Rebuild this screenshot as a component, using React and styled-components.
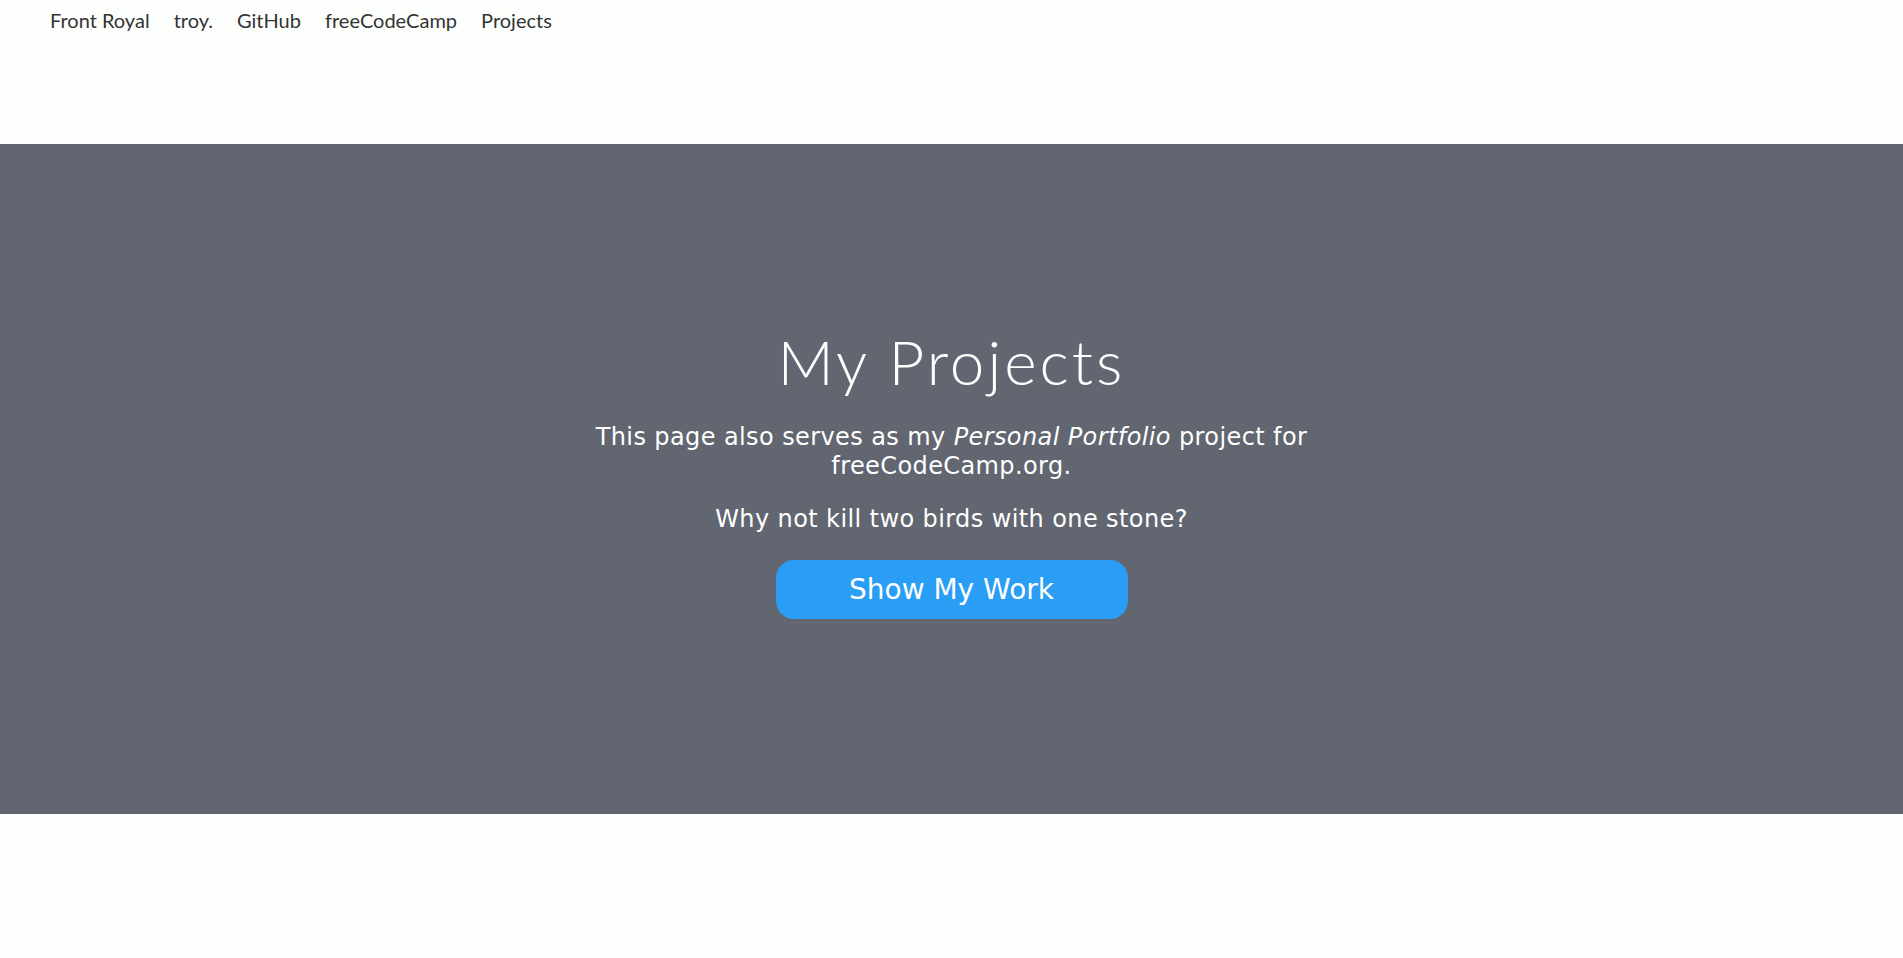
import React from "react";
import styled, { createGlobalStyle } from "styled-components";

const GlobalStyle = createGlobalStyle`
  * {
    box-sizing: border-box;
  }
  body {
    margin: 0;
    background-color: #fdfffc;
    font-family: "Lato", "Open Sans", sans-serif;
  }
`;

export default function App() {
  return (
    <>
      <GlobalStyle />
      <Header>
        <NavList>
          <NavLink href="#">Front Royal</NavLink>
          <NavLink href="#">troy.</NavLink>
          <NavLink href="#">GitHub</NavLink>
          <NavLink href="#">freeCodeCamp</NavLink>
          <NavLink href="#">Projects</NavLink>
        </NavList>
      </Header>
      <Hero>
        <Title>My Projects</Title>
        <Lead>
          This page also serves as my <em>Personal Portfolio</em> project for
          <br />
          freeCodeCamp.org.
        </Lead>
        <Lead $last>Why not kill two birds with one stone?</Lead>
        <ShowButton href="#">Show My Work</ShowButton>
      </Hero>
      <Footer />
    </>
  );
}

const Header = styled.header`
  height: 144px;
  padding: 8px 50px 0;
`;

const NavList = styled.nav`
  display: flex;
  gap: 24px;
`;

const NavLink = styled.a`
  text-decoration: none;
  color: #333;
  font-family: "Lato", sans-serif;
  font-size: 20px;
  line-height: 24px;
`;

const Hero = styled.section`
  height: 670px;
  padding-bottom: 10px;
  background-color: #626670;
  color: #fff;
  display: flex;
  flex-direction: column;
  align-items: center;
  justify-content: center;
  text-align: center;
`;

const Title = styled.h1`
  margin: 0 0 30px;
  font-family: "Lato", sans-serif;
  font-weight: 300;
  font-size: 62px;
  line-height: 64px;
  letter-spacing: 3px;
`;

const Lead = styled.p`
  margin: 0 0 ${(p) => (p.$last ? "26px" : "24px")};
  font-family: "DejaVu Sans", sans-serif;
  font-weight: 400;
  font-size: 24px;
  line-height: 29px;
  letter-spacing: 0.4px;
  em {
    font-style: italic;
    font-weight: 400;
  }
`;

const ShowButton = styled.a`
  display: flex;
  align-items: center;
  justify-content: center;
  width: 352px;
  height: 59px;
  border-radius: 18px;
  background-color: #2a9df4;
  color: #fff;
  text-decoration: none;
  font-family: "DejaVu Sans", sans-serif;
  font-size: 28px;
`;

const Footer = styled.footer`
  height: 144px;
`;
